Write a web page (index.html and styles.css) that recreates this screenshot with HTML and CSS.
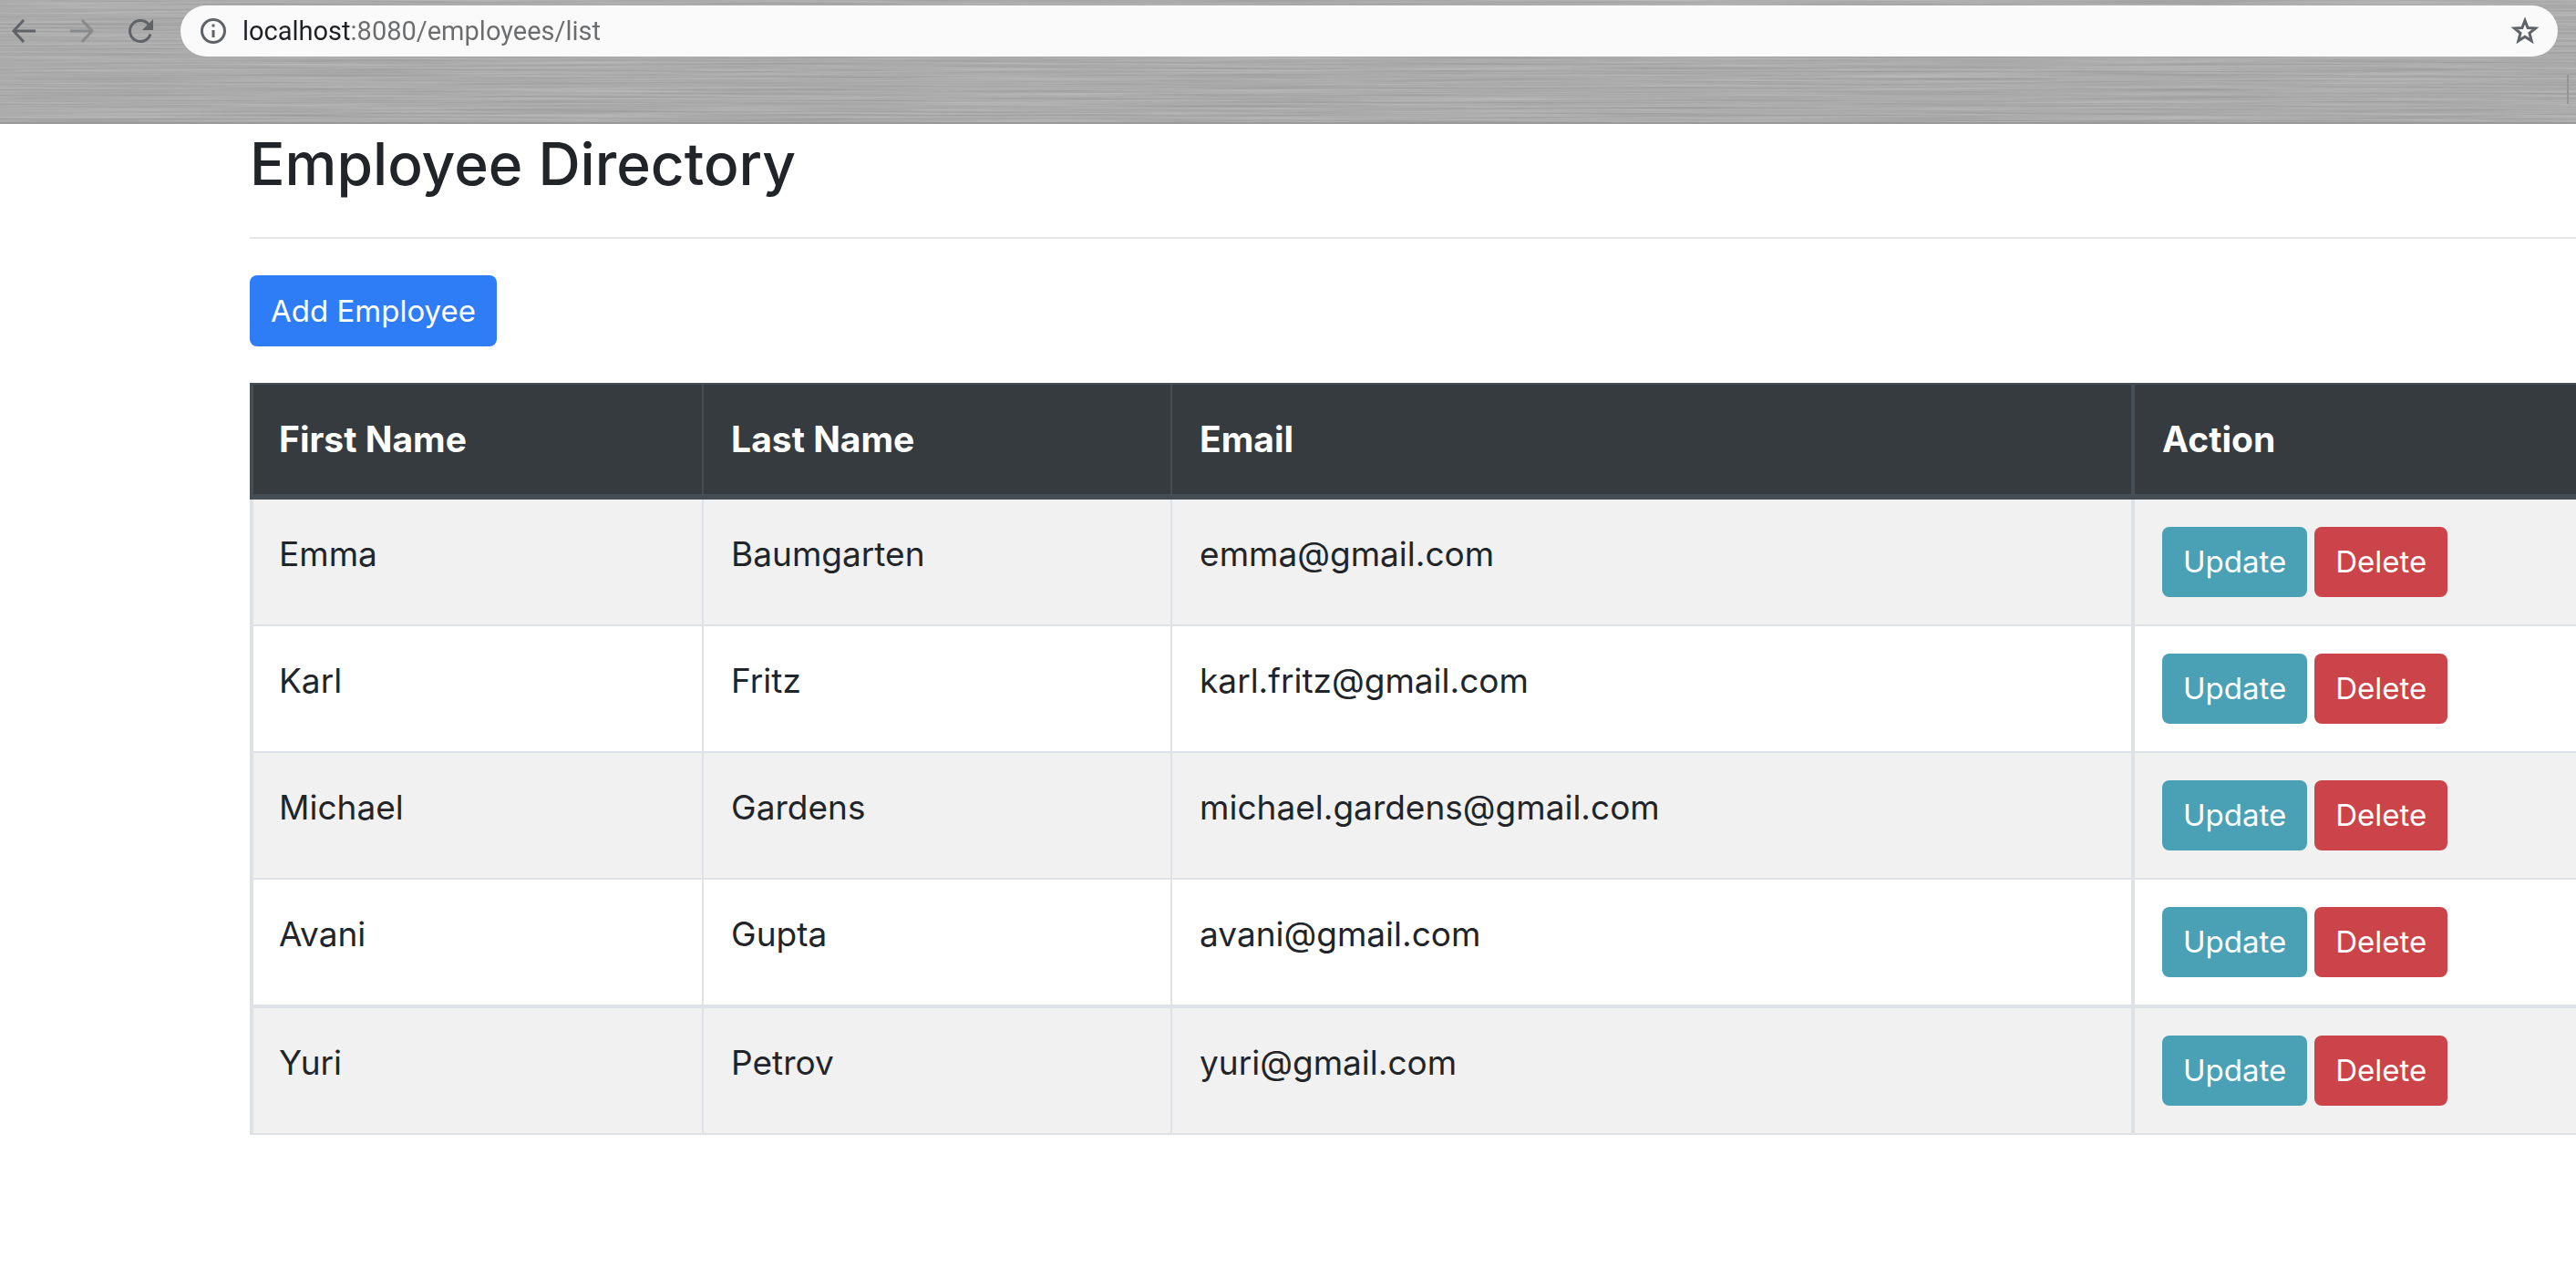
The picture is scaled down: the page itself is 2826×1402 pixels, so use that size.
FILE: index.html
```html
<!DOCTYPE html>
<html lang="en">
<head>
<meta charset="utf-8">
<title>Employee Directory</title>
<link rel="stylesheet" href="styles.css">
</head>
<body>
<header class="browser">
  <svg class="browser-metal" aria-hidden="true">
    <filter id="brushed" x="0" y="0" width="100%" height="100%" color-interpolation-filters="sRGB">
      <feTurbulence type="fractalNoise" baseFrequency="0.004 0.5" numOctaves="3" seed="7"/>
      <feColorMatrix values="0.16 0 0 0 0.59  0.16 0 0 0 0.59  0.16 0 0 0 0.59  0 0 0 0 1"/>
    </filter>
    <rect width="100%" height="100%" filter="url(#brushed)"/>
  </svg>
  <div class="browser-bar">
    <nav class="browser-nav" aria-label="History">
      <button class="icon-button" type="button" aria-label="Back">
        <svg viewBox="0 0 32 32"><path d="M29 16H5M16 4 5 16l11 12"/></svg>
      </button>
      <button class="icon-button" type="button" aria-label="Forward" disabled>
        <svg viewBox="0 0 32 32"><path d="M3 16h24M16 4l11 12-11 12"/></svg>
      </button>
      <button class="icon-button" type="button" aria-label="Reload">
        <svg viewBox="0 0 32 32"><path d="M25.500 9.500A11.500 11.500 0 1 0 27 19.500"/><path class="solid" d="M30 3v12H18z"/></svg>
      </button>
    </nav>
    <div class="address">
      <svg class="address-info" viewBox="0 0 32 32" aria-hidden="true"><circle cx="16" cy="16" r="12.500"/><path d="M16 15v8M16 8.500v3"/></svg>
      <input class="address-input" type="text" aria-label="Address" value="localhost:8080/employees/list">
      <button class="icon-button" type="button" aria-label="Bookmark this page">
        <svg viewBox="0 0 32 32"><path d="M16 4.500l3.100 8 8.500.5-6.600 5.400 2.200 8.400L16 22.200l-7.200 4.600L11 18.400 4.400 13l8.500-.5z"/></svg>
      </button>
    </div>
  </div>
  <div class="bookmarks"></div>
</header>
<main class="page">
  <h1 class="page-title">Employee Directory</h1>
  <hr class="rule">
  <a class="btn btn-primary" href="#add">Add Employee</a>
  <table class="table">
    <colgroup><col class="col-first"><col class="col-last"><col class="col-email"><col></colgroup>
    <thead>
      <tr><th scope="col">First Name</th><th scope="col">Last Name</th><th scope="col">Email</th><th scope="col">Action</th></tr>
    </thead>
    <tbody>
      <tr><td>Emma</td><td>Baumgarten</td><td>emma@gmail.com</td><td><div class="actions"><a class="btn btn-info" href="#update">Update</a><a class="btn btn-danger" href="#delete">Delete</a></div></td></tr>
      <tr><td>Karl</td><td>Fritz</td><td>karl.fritz@gmail.com</td><td><div class="actions"><a class="btn btn-info" href="#update">Update</a><a class="btn btn-danger" href="#delete">Delete</a></div></td></tr>
      <tr><td>Michael</td><td>Gardens</td><td>michael.gardens@gmail.com</td><td><div class="actions"><a class="btn btn-info" href="#update">Update</a><a class="btn btn-danger" href="#delete">Delete</a></div></td></tr>
      <tr><td>Avani</td><td>Gupta</td><td>avani@gmail.com</td><td><div class="actions"><a class="btn btn-info" href="#update">Update</a><a class="btn btn-danger" href="#delete">Delete</a></div></td></tr>
      <tr><td>Yuri</td><td>Petrov</td><td>yuri@gmail.com</td><td><div class="actions"><a class="btn btn-info" href="#update">Update</a><a class="btn btn-danger" href="#delete">Delete</a></div></td></tr>
    </tbody>
  </table>
</main>
</body>
</html>
```
FILE: styles.css
```css
* {
  box-sizing: border-box;
}

body {
  margin: 0;
  background: #fff;
  color: #212529;
  font: 400 37px/60px Inter, "Liberation Sans", sans-serif;
}

/* Browser toolbar */
.browser {
  position: relative;
  border-bottom: 2px solid #999;
  background: #adadad;
}

.browser-metal {
  position: absolute;
  inset: 0;
  width: 100%;
  height: 100%;
}

.browser-bar {
  position: relative;
  display: flex;
  align-items: center;
  gap: 28px;
  padding: 6px 20px 0 10px;
}

.browser-nav {
  display: flex;
  gap: 32px;
}

.icon-button {
  flex: none;
  width: 32px;
  height: 32px;
  padding: 0;
  border: 0;
  background: none;
  color: #5f6368;
}

.icon-button:disabled {
  color: #88898b;
}

.icon-button svg,
.address-info {
  display: block;
  width: 32px;
  height: 32px;
  fill: none;
  stroke: currentColor;
  stroke-width: 3;
}

.icon-button .solid {
  fill: currentColor;
  stroke: none;
}

.address {
  flex: 1;
  display: flex;
  align-items: center;
  gap: 16px;
  height: 56px;
  padding: 0 20px;
  border-radius: 28px;
  background: #fafafa;
  color: #5f6368;
}

.address-input {
  flex: 1;
  min-width: 0;
  height: 56px;
  padding: 0;
  border: 0;
  outline: 0;
  background: linear-gradient(90deg, #202124 119px, #6b6c6e 119px);
  background-clip: text;
  color: transparent;
  font: 400 29px/40px Roboto, "Liberation Sans", sans-serif;
}

.bookmarks {
  position: relative;
  height: 32px;
  margin: 20px 8px;
  border-right: 2px solid #959595;
}

/* Page content */
.page {
  padding-left: 274px;
}

.page-title {
  margin: 0;
  padding: 2px 0 38px;
  font-size: 64px;
  font-weight: 500;
  line-height: 84px;
}

.rule {
  margin: 0 0 40px;
  border: 0;
  border-top: 2px solid #e5e5e5;
}

.btn {
  display: inline-block;
  padding: 12px 23px;
  border-radius: 8px;
  color: #fff;
  font-size: 33px;
  line-height: 53px;
  text-decoration: none;
  vertical-align: top;
}

.btn-primary {
  background: #2f7df6;
  line-height: 54px;
}

.btn-info {
  background: #4aa1b6;
}

.btn-danger {
  background: #cb444a;
}

.table {
  width: 100%;
  margin: 40px 0 0;
  border-collapse: separate;
  border-spacing: 0;
  table-layout: fixed;
}

.col-first {
  width: 19.44%;
}

.col-last {
  width: 20.14%;
}

.col-email {
  width: 41.3%;
}

.table th,
.table td {
  padding: 30px;
  border: solid #dee2e6;
  border-width: 0 0 2px 2px;
  text-align: left;
  vertical-align: top;
}

.table th {
  border-width: 2px 0 6px 2px;
  border-color: #454d55;
  background: #363b3f;
  color: #fff;
  font-size: 39px;
  font-weight: 700;
}

.table th:first-child,
.table th:last-child,
.table td:first-child,
.table td:last-child {
  border-left-width: 4px;
}

.table th:first-child,
.table td:first-child {
  padding-left: 28px;
}

.table tbody tr:nth-child(odd) {
  background: #f1f1f1;
}

.table tbody tr:nth-child(4) td {
  border-bottom-width: 4px;
}

.actions {
  display: flex;
  gap: 8px;
}
```
